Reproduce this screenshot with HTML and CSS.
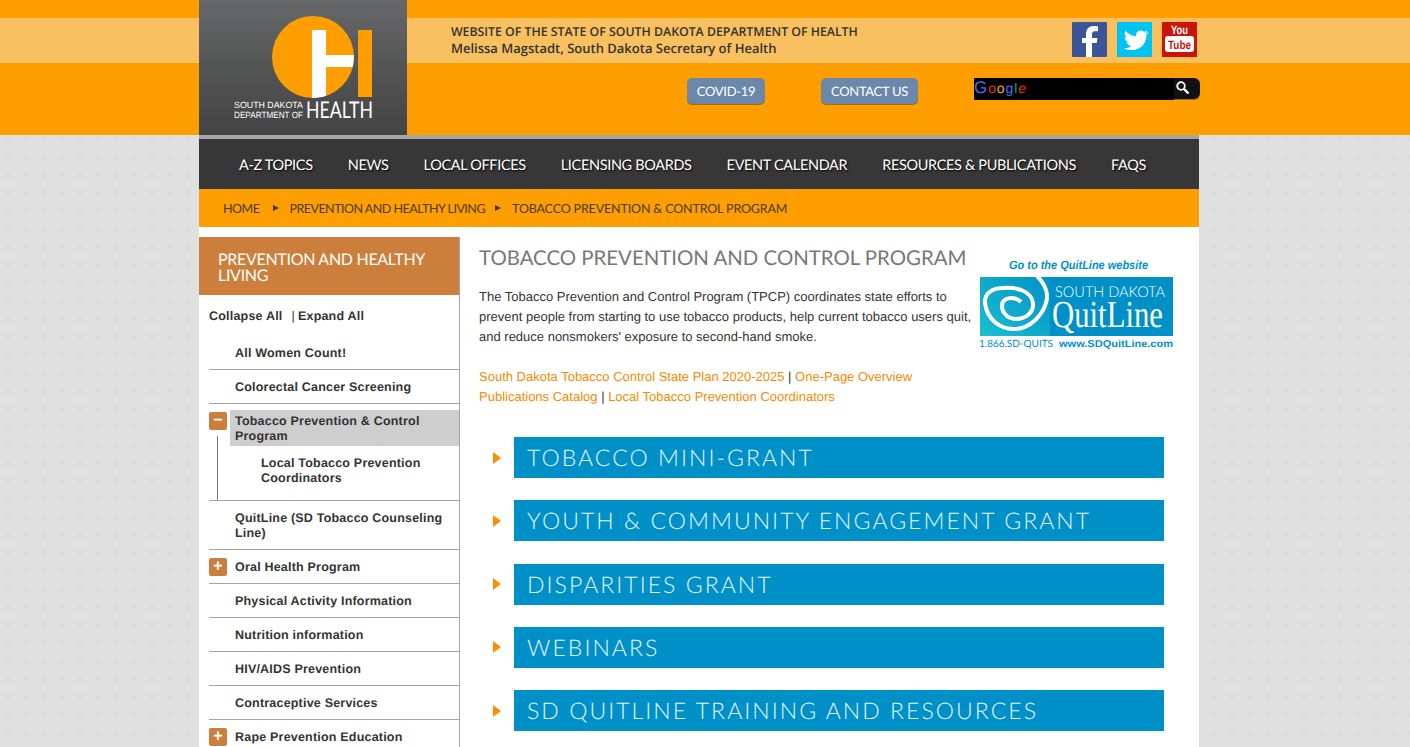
FILE: index.html
```html
<!DOCTYPE html>
<html lang="en">
  <head>
    <meta charset="UTF-8" />
    <title>Tobacco Prevention and Control Program</title>
    <link rel="stylesheet" href="styles.css">
  </head>
  <body>
    <header class="top">
      <div class="wrap top-inner">
        <a class="logo">
          <svg width="208" height="135" viewBox="0 0 208 135">
            <defs>
              <clipPath id="disc"><circle cx="114" cy="57" r="41" /></clipPath>
            </defs>
            <circle cx="114" cy="57" r="41" fill="#ff9e00" />
            <g clip-path="url(#disc)" fill="#fff">
              <rect x="113" y="30" width="14" height="70" />
              <rect x="127" y="55" width="30" height="12" />
            </g>
            <rect x="159" y="30" width="14" height="67" fill="#ff9e00" />
            <text x="35" y="108" class="logo-small" textLength="69" lengthAdjust="spacingAndGlyphs">SOUTH DAKOTA</text>
            <text x="35" y="118" class="logo-small" textLength="69" lengthAdjust="spacingAndGlyphs">DEPARTMENT OF</text>
            <text x="107" y="118" class="logo-big" textLength="67" lengthAdjust="spacingAndGlyphs">HEALTH</text>
          </svg>
        </a>
        <div class="top-right">
          <div class="band">
            <div class="band-text">
              <p class="band-caps">WEBSITE OF THE STATE OF SOUTH DAKOTA DEPARTMENT OF HEALTH</p>
              <p>Melissa Magstadt, South Dakota Secretary of Health</p>
            </div>
            <div class="social">
              <svg width="35" height="35" viewBox="0 0 35 35">
                <rect width="35" height="35" rx="1" fill="#3b5599" />
                <path d="M14 35V21H10v-5h4v-4c0-5 3-8 7.500-8 2 0 3.500.2 4.500.4v4.800h-3c-2.300 0-3 1.200-3 3V16h5.500l-.8 5H20v14z" fill="#fff" />
              </svg>
              <svg width="35" height="35" viewBox="0 0 35 35">
                <rect width="35" height="35" fill="#00c3f5" />
                <path d="M31 10.500c-1 .5-2 .7-3 .9 1-.7 1.900-1.700 2.300-2.900-1 .6-2.100 1-3.300 1.300-2.600-2.800-8.500-1-8 4.400-4.300-.2-8-2.300-10.600-5.400-1.300 2.400-.6 5.200 1.500 6.700-.8 0-1.600-.3-2.300-.6 0 2.600 1.800 4.700 4.200 5.300-.7.200-1.500.2-2.300.1.700 2.100 2.600 3.600 4.900 3.700-2.200 1.700-5 2.500-7.600 2.200 7 4.300 22.500 2 22.700-13.800 1-.7 1.800-1.500 2.500-2.100z" fill="#fff" />
              </svg>
              <svg width="35" height="35" viewBox="0 0 35 35">
                <rect width="35" height="35" fill="#c9140a" />
                <rect x="3" y="14" width="29" height="16" rx="3" fill="#fff" />
                <text x="17.500" y="12" class="yt yt-top" textLength="17" lengthAdjust="spacingAndGlyphs">You</text>
                <text x="17.500" y="27" class="yt yt-bottom" textLength="23" lengthAdjust="spacingAndGlyphs">Tube</text>
              </svg>
            </div>
          </div>
          <div class="tools">
            <a class="btn btn-covid">COVID-19</a>
            <a class="btn btn-contact">CONTACT US</a>
            <div class="search">
              <div class="search-box">
                <span class="g-blue g-big">G</span><span class="g-red">o</span><span class="g-yellow">o</span><span class="g-blue">g</span><span class="g-green">l</span><span class="g-red g-e">e</span>
              </div>
              <div class="search-btn">
                <svg width="16" height="16" viewBox="0 0 16 16">
                  <circle cx="6" cy="6" r="3.800" fill="none" stroke="#fff" stroke-width="1.800" />
                  <path d="M9 9l4.500 4.500" stroke="#fff" stroke-width="2.400" />
                </svg>
              </div>
            </div>
          </div>
        </div>
      </div>
    </header>

    <div class="wrap page">
      <nav class="mainnav">
        <a>A-Z TOPICS</a>
        <a>NEWS</a>
        <a>LOCAL OFFICES</a>
        <a>LICENSING BOARDS</a>
        <a>EVENT CALENDAR</a>
        <a>RESOURCES &amp; PUBLICATIONS</a>
        <a>FAQS</a>
      </nav>
      <div class="crumbs">
        <a class="crumb-tight">HOME</a><i class="crumb-arrow"></i>
        <a class="crumb-tight">PREVENTION AND HEALTHY LIVING</a><i class="crumb-arrow crumb-arrow-2"></i>
        <a>TOBACCO PREVENTION &amp; CONTROL PROGRAM</a>
      </div>

      <main class="body">
        <aside class="side">
          <h2 class="side-title">PREVENTION AND HEALTHY LIVING</h2>
          <div class="side-inner">
            <p class="collapse"><a>Collapse All</a><span class="pipe">|</span><a>Expand All</a></p>
            <ul class="tree">
              <li class="row">All Women Count!</li>
              <li class="row">Colorectal Cancer Screening</li>
              <li class="row row-open">
                <span class="toggle">&minus;</span>
                <div class="current">Tobacco Prevention &amp; Control Program</div>
                <div class="sub">Local Tobacco Prevention Coordinators</div>
              </li>
              <li class="row">QuitLine (SD Tobacco Counseling Line)</li>
              <li class="row"><span class="toggle">+</span>Oral Health Program</li>
              <li class="row">Physical Activity Information</li>
              <li class="row">Nutrition information</li>
              <li class="row">HIV/AIDS Prevention</li>
              <li class="row">Contraceptive Services</li>
              <li class="row"><span class="toggle">+</span>Rape Prevention Education</li>
            </ul>
          </div>
        </aside>

        <section class="content">
          <a class="quitline">
            <svg width="200" height="96" viewBox="0 0 200 96">
              <defs>
                <linearGradient id="teal" x1="0" x2="1" y1="1" y2="0">
                  <stop offset="0" stop-color="#1cc0cf" />
                  <stop offset="1" stop-color="#0090c8" />
                </linearGradient>
              </defs>
              <text x="103.500" y="13" class="ql-go" textLength="139" lengthAdjust="spacingAndGlyphs" text-anchor="middle">Go to the QuitLine website</text>
              <rect x="5" y="21" width="193" height="59" fill="#0090c8" />
              <rect x="5" y="21" width="70" height="59" fill="url(#teal)" />
              <path d="M62 20C70 28 74 38 71 47C67 60 55 72 41 73C26 74 12 64 10 47C9 37 18 32 28 32C40 31 56 34 58 47C59 57 50 63 41 63C33 63 27 57 27 50C27 45 31 42 36 42C40 42 43 43 46 46" fill="none" stroke="#fff" stroke-width="4" />
              <text x="80" y="41" class="ql-sd" textLength="110" lengthAdjust="spacingAndGlyphs">SOUTH DAKOTA</text>
              <text x="77" y="71" class="ql-name" textLength="111" lengthAdjust="spacingAndGlyphs">QuitLine</text>
              <text x="4" y="91" class="ql-phone" textLength="74" lengthAdjust="spacingAndGlyphs">1.866.SD-QUITS</text>
              <text x="84" y="91" class="ql-url" textLength="114" lengthAdjust="spacingAndGlyphs">www.SDQuitLine.com</text>
            </svg>
          </a>
          <h1 class="title">TOBACCO PREVENTION AND CONTROL PROGRAM</h1>
          <p class="intro">The Tobacco Prevention and Control Program (TPCP) coordinates state efforts to prevent people from starting to use tobacco products, help current tobacco users quit, and reduce nonsmokers' exposure to second-hand smoke.</p>
          <p class="links">
            <a>South Dakota Tobacco Control State Plan 2020-2025</a> | <a>One-Page Overview</a><br>
            <a>Publications Catalog</a> | <a>Local Tobacco Prevention Coordinators</a>
          </p>
          <div class="accordion">
            <div class="acc-row"><i class="acc-arrow"></i><h3 class="acc-head">TOBACCO MINI-GRANT</h3></div>
            <div class="acc-row"><i class="acc-arrow"></i><h3 class="acc-head">YOUTH &amp; COMMUNITY ENGAGEMENT GRANT</h3></div>
            <div class="acc-row"><i class="acc-arrow"></i><h3 class="acc-head">DISPARITIES GRANT</h3></div>
            <div class="acc-row"><i class="acc-arrow"></i><h3 class="acc-head">WEBINARS</h3></div>
            <div class="acc-row"><i class="acc-arrow"></i><h3 class="acc-head">SD QUITLINE TRAINING AND RESOURCES</h3></div>
          </div>
        </section>
      </main>
    </div>
  </body>
</html>
```

FILE: styles.css
```css
html,
body {
  height: 100%;
  overflow: hidden;
}

body {
  margin: 0;
  background-color: #e0e0e0;
  background-image: radial-gradient(circle at 9px 9px, #dbdbdb 3px, transparent 3.5px);
  background-size: 18px 18px;
  background-position: -1px 130px;
  font-family: "Liberation Sans", Arial, sans-serif;
  color: #333;
  text-rendering: geometricPrecision;
}

.wrap {
  width: 1000px;
  margin-left: 199px;
}

/* header */
.top {
  height: 135px;
  background-image: linear-gradient(#ff9e00 18px, #f9c05f 18px, #f9c05f 63px, #ff9e00 63px);
}

.top-inner {
  display: flex;
}

.logo {
  display: block;
  width: 208px;
  height: 135px;
  background-image: linear-gradient(#666768, #434343);
}

.logo svg {
  display: block;
}

.logo-small {
  font-family: "Liberation Sans", sans-serif;
  font-size: 9px;
  fill: #fff;
}

.logo-big {
  font-family: "Lato", sans-serif;
  font-size: 23px;
  fill: #fff;
}

.top-right {
  flex: 1;
}

.band {
  display: flex;
  justify-content: space-between;
  height: 45px;
  margin-top: 18px;
}

.band-text {
  padding: 6px 0 0 44px;
  font-family: "Open Sans", sans-serif;
  font-weight: 600;
  font-size: 13px;
  line-height: 16px;
  color: #333;
}

.band-text p {
  margin: 0;
}

.band-text .band-caps {
  font-size: 12.300px;
}

.social {
  display: flex;
  gap: 10px;
  padding: 4px 3px 0 0;
}

.yt {
  font-family: "Liberation Sans", sans-serif;
  font-weight: bold;
  text-anchor: middle;
}

.yt-top {
  font-size: 12px;
  fill: #fff;
}

.yt-bottom {
  font-size: 12px;
  fill: #c9140a;
}

.tools {
  display: flex;
  align-items: flex-start;
  padding-top: 15px;
  padding-left: 280px;
}

.btn {
  display: block;
  height: 26px;
  line-height: 27px;
  box-sizing: border-box;
  text-align: center;
  background-color: #6b88ab;
  border-radius: 5px;
  box-shadow: 0 1px 0 #a86a08;
  color: #fff;
  font-family: "Lato", sans-serif;
  font-size: 13px;
  letter-spacing: -0.3px;
}

.btn-covid {
  width: 78px;
  margin-right: 56px;
}

.btn-contact {
  width: 97px;
  margin-right: 56px;
}

.search {
  display: flex;
}

.search-box {
  width: 200px;
  height: 22px;
  background-color: #000;
  font-family: "Liberation Sans", sans-serif;
  font-size: 14px;
  line-height: 20px;
  letter-spacing: 0.9px;
  white-space: nowrap;
}

.g-big {
  font-size: 17px;
}

.g-blue {
  color: #4070f0;
}

.g-red {
  color: #e8301c;
}

.g-yellow {
  color: #f5b400;
}

.g-green {
  color: #2ca04a;
}

.g-e {
  font-style: italic;
}

.search-btn {
  width: 26px;
  height: 21px;
  background-color: #111;
  border-radius: 0 6px 6px 0;
  box-shadow: 0 1px 0 #a86a08;
  padding: 2px 0 0 1px;
  box-sizing: border-box;
}

/* nav */
.mainnav {
  display: flex;
  gap: 35px;
  height: 50px;
  padding-left: 40px;
  background-color: #373737;
  border-top: 4px solid #a5a5a5;
  font-family: "Lato", sans-serif;
  font-size: 14.500px;
  letter-spacing: -0.35px;
  line-height: 54px;
  color: #fff;
  text-shadow: 1px 1px 2px #000;
  white-space: nowrap;
}

.crumbs {
  display: flex;
  align-items: center;
  height: 38px;
  padding-left: 24px;
  background-color: #ff9e00;
  font-family: "Lato", sans-serif;
  font-size: 12.500px;
  letter-spacing: -0.15px;
  color: #4a3a20;
  white-space: nowrap;
}

.crumb-tight {
  letter-spacing: -0.5px;
}

.crumb-arrow {
  width: 0;
  height: 0;
  margin: 0 10px 0 14px;
  border-left: 6px solid #40352a;
  border-top: 3.500px solid transparent;
  border-bottom: 3.500px solid transparent;
}

.crumb-arrow-2 {
  margin: 0 11px 0 10px;
}

/* main area */
.body {
  display: flex;
  height: 520px;
  background-color: #fff;
}

.side {
  width: 260px;
  margin-top: 10px;
  border-right: 1px solid #a5a5a5;
  font-weight: bold;
  font-size: 12.500px;
  line-height: 15px;
  letter-spacing: 0.2px;
}

.side-title {
  margin: 0;
  height: 58px;
  box-sizing: border-box;
  padding: 15px 10px 0 19px;
  background-color: #cc7f3c;
  color: #fff;
  font-family: "Lato", sans-serif;
  font-weight: 400;
  font-size: 16px;
  line-height: 16px;
  letter-spacing: -0.3px;
}

.side-inner {
  padding-left: 10px;
}

.collapse {
  margin: 0;
  padding-top: 14px;
  height: 27px;
}

.pipe {
  margin: 0 3px 0 9px;
  font-weight: normal;
}

.tree {
  list-style: none;
  margin: 0;
  padding: 0;
}

.row {
  position: relative;
  padding: 10px 10px 8px 26px;
  border-bottom: 1px solid #a5a5a5;
}

.row:last-child {
  border-bottom: 0;
}

.toggle {
  position: absolute;
  left: 0;
  top: 8px;
  width: 18px;
  height: 18px;
  border-radius: 2px;
  background-color: #cc7f3c;
  color: #fff;
  font-size: 16px;
  line-height: 17px;
  text-align: center;
  letter-spacing: 0;
}

.row-open {
  padding: 6px 0 14px 21px;
}

.row-open::before {
  content: "";
  position: absolute;
  left: 8px;
  top: 32px;
  bottom: 0;
  border-left: 1px solid #777;
}

.current {
  padding: 4px 10px 2px 5px;
  background-color: #cecece;
}

.sub {
  padding: 10px 20px 0 31px;
}

/* content */
.content {
  flex: 1;
  padding: 0 24px 0 19px;
  font-size: 13px;
  line-height: 20px;
}

.quitline {
  float: right;
  margin-top: 29px;
}

.quitline svg {
  display: block;
}

.ql-go {
  font-family: "Liberation Sans", sans-serif;
  font-weight: bold;
  font-style: italic;
  font-size: 12px;
  fill: #0090c8;
}

.ql-sd {
  font-family: "Lato", sans-serif;
  font-weight: 300;
  font-size: 15px;
  fill: #fff;
}

.ql-name {
  font-family: "Liberation Serif", serif;
  font-size: 38px;
  fill: #fff;
}

.ql-phone {
  font-family: "Lato", sans-serif;
  font-size: 10px;
  fill: #0090c8;
}

.ql-url {
  font-family: "Liberation Sans", sans-serif;
  font-weight: bold;
  font-size: 10px;
  fill: #0090c8;
}

.title {
  margin: 19px 0 0;
  font-family: "Lato", sans-serif;
  font-weight: 400;
  font-size: 20.400px;
  line-height: 25px;
  color: #777;
  white-space: nowrap;
}

.intro {
  margin: 16px 0 0;
}

.links {
  margin: 20px 0 0;
}

.links a {
  color: #f58a00;
}

.accordion {
  clear: both;
  margin-top: 30px;
  margin-left: 14px;
}

.acc-row {
  display: flex;
  align-items: center;
  margin-bottom: 22.250px;
}

.acc-arrow {
  width: 0;
  height: 0;
  margin-right: 13px;
  border-left: 8px solid #ff8c00;
  border-top: 6px solid transparent;
  border-bottom: 6px solid transparent;
}

.acc-head {
  flex: 1;
  margin: 0 11px 0 0;
  height: 41px;
  padding-left: 13px;
  background-color: #0090c8;
  color: #e4f4fa;
  font-family: "Lato", sans-serif;
  font-weight: 300;
  font-size: 23px;
  line-height: 40px;
  letter-spacing: 2.050px;
}
```
